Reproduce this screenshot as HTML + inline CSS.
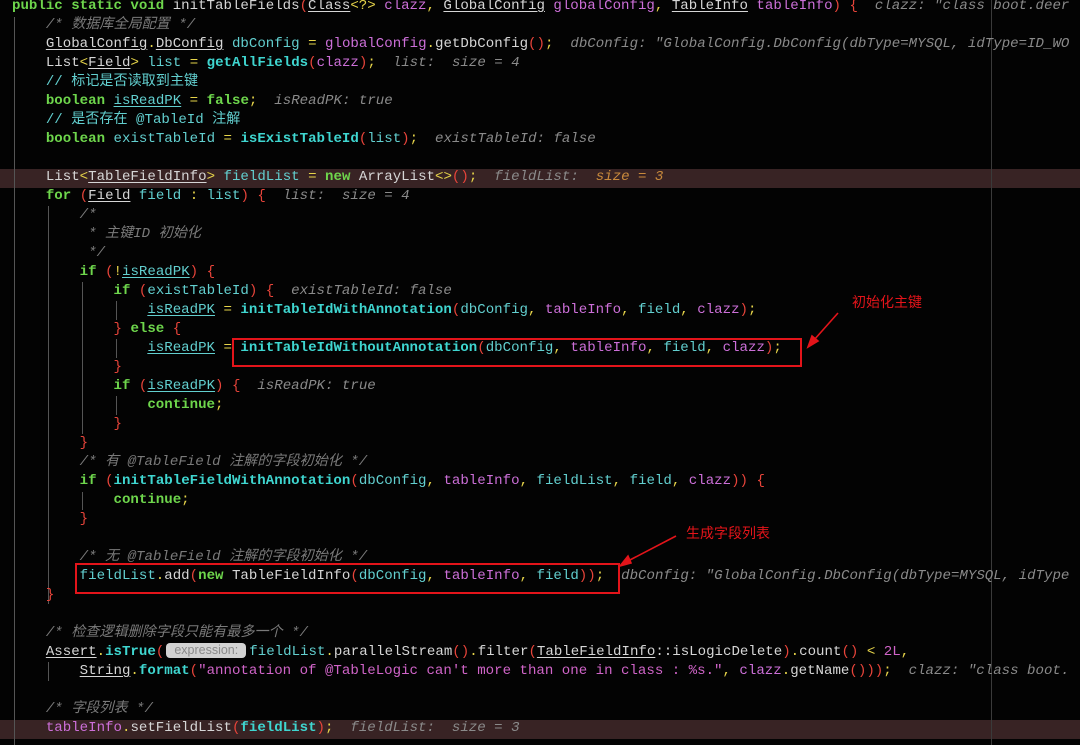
<!DOCTYPE html>
<html><head><meta charset="utf-8">
<style>
html,body{margin:0;padding:0;background:#000;width:1080px;height:745px;overflow:hidden;}
#ed{position:relative;width:1080px;height:745px;background:#030303;font-family:"Liberation Mono","Noto Sans CJK SC",monospace;font-size:14.1px;color:#d6d6d6;}
.l{position:absolute;left:12px;height:19px;line-height:19px;white-space:pre;}
.hl{position:absolute;left:0;width:1080px;height:19px;background:#382324;}
.k{color:#6ed64c;font-weight:bold}
.f{color:#62cfcf}
.m{color:#3fd6d0;font-weight:bold}
.p{color:#cc6fd8}
.r{color:#e8443a}
.y{color:#e6d44a}
.c{color:#7a7a7a;font-style:italic}
.h{color:#8a8a8a;font-style:italic}
.o{color:#c98a3c;font-style:italic}
.u{text-decoration:underline;text-underline-offset:2px}
.s{color:#d064c8}
.g{position:absolute;width:1px;background:#555;}
.box{position:absolute;border:2.5px solid #e3141a;box-sizing:border-box;}
.note{position:absolute;color:#e5141a;font-family:"Noto Sans CJK SC",sans-serif;font-size:14px;}
.pill{display:inline-block;width:80px;height:15px;line-height:15px;margin:0 3px 0 2px;border-radius:4px;background:#d2d2d2;color:#8a8a8a;font-family:"Liberation Sans",sans-serif;font-size:12.5px;text-align:center;vertical-align:1px;}
</style></head><body><div id="ed">
<div class="hl" style="top:169px"></div>
<div class="hl" style="top:720px"></div>
<div class="g" style="left:14px;top:17px;height:728px"></div>
<div class="g" style="left:48px;top:206px;height:398px"></div>
<div class="g" style="left:82px;top:282px;height:152px"></div>
<div class="g" style="left:82px;top:492px;height:18px"></div>
<div class="g" style="left:116px;top:301px;height:19px"></div>
<div class="g" style="left:116px;top:339px;height:19px"></div>
<div class="g" style="left:116px;top:396px;height:19px"></div>
<div class="g" style="left:48px;top:662px;height:19px"></div>
<div class="g" style="left:991px;top:0;height:745px;background:#3a3a3a"></div>

<div class="l" style="top:-3px"><span class="k">public static void </span>initTableFields<span class="r">(</span><span class="u">Class</span><span class="y">&lt;?&gt;</span> <span class="p">clazz</span><span class="y">,</span> <span class="u">GlobalConfig</span> <span class="p">globalConfig</span><span class="y">,</span> <span class="u">TableInfo</span> <span class="p">tableInfo</span><span class="r">) {</span>  <span class="h">clazz: "class boot.deer</span></div>
<div class="l" style="top:16px">    <span class="c">/* 数据库全局配置 */</span></div>
<div class="l" style="top:35px">    <span class="u">GlobalConfig</span><span class="y">.</span><span class="u">DbConfig</span> <span class="f">dbConfig</span> <span class="y">=</span> <span class="p">globalConfig</span><span class="y">.</span>getDbConfig<span class="r">()</span><span class="y">;</span>  <span class="h">dbConfig: "GlobalConfig.DbConfig(dbType=MYSQL, idType=ID_WO</span></div>
<div class="l" style="top:54px">    List<span class="y">&lt;</span><span class="u">Field</span><span class="y">&gt;</span> <span class="f">list</span> <span class="y">=</span> <span class="m">getAllFields</span><span class="r">(</span><span class="p">clazz</span><span class="r">)</span><span class="y">;</span>  <span class="h">list:  size = 4</span></div>
<div class="l" style="top:73px">    <span class="f">// 标记是否读取到主键</span></div>
<div class="l" style="top:92px">    <span class="k">boolean</span> <span class="u f">isReadPK</span> <span class="y">=</span> <span class="k">false</span><span class="y">;</span>  <span class="h">isReadPK: true</span></div>
<div class="l" style="top:111px">    <span class="f">// 是否存在 @TableId 注解</span></div>
<div class="l" style="top:130px">    <span class="k">boolean</span> <span class="f">existTableId</span> <span class="y">=</span> <span class="m">isExistTableId</span><span class="r">(</span><span class="f">list</span><span class="r">)</span><span class="y">;</span>  <span class="h">existTableId: false</span></div>
<div class="l" style="top:168px">    List<span class="y">&lt;</span><span class="u">TableFieldInfo</span><span class="y">&gt;</span> <span class="f">fieldList</span> <span class="y">=</span> <span class="k">new</span> ArrayList<span class="y">&lt;&gt;</span><span class="r">()</span><span class="y">;</span>  <span class="h">fieldList:  </span><span class="o">size = 3</span></div>
<div class="l" style="top:187px">    <span class="k">for</span> <span class="r">(</span><span class="u">Field</span> <span class="f">field</span> <span class="y">:</span> <span class="f">list</span><span class="r">) {</span>  <span class="h">list:  size = 4</span></div>
<div class="l" style="top:206px">        <span class="c">/*</span></div>
<div class="l" style="top:225px">         <span class="c">* 主键ID 初始化</span></div>
<div class="l" style="top:244px">         <span class="c">*/</span></div>
<div class="l" style="top:263px">        <span class="k">if</span> <span class="r">(</span><span class="y">!</span><span class="u f">isReadPK</span><span class="r">) {</span></div>
<div class="l" style="top:282px">            <span class="k">if</span> <span class="r">(</span><span class="f">existTableId</span><span class="r">) {</span>  <span class="h">existTableId: false</span></div>
<div class="l" style="top:301px">                <span class="u f">isReadPK</span> <span class="y">=</span> <span class="m">initTableIdWithAnnotation</span><span class="r">(</span><span class="f">dbConfig</span><span class="y">,</span> <span class="p">tableInfo</span><span class="y">,</span> <span class="f">field</span><span class="y">,</span> <span class="p">clazz</span><span class="r">)</span><span class="y">;</span></div>
<div class="l" style="top:320px">            <span class="r">}</span> <span class="k">else</span> <span class="r">{</span></div>
<div class="l" style="top:339px">                <span class="u f">isReadPK</span> <span class="y">=</span> <span class="m">initTableIdWithoutAnnotation</span><span class="r">(</span><span class="f">dbConfig</span><span class="y">,</span> <span class="p">tableInfo</span><span class="y">,</span> <span class="f">field</span><span class="y">,</span> <span class="p">clazz</span><span class="r">)</span><span class="y">;</span></div>
<div class="l" style="top:358px">            <span class="r">}</span></div>
<div class="l" style="top:377px">            <span class="k">if</span> <span class="r">(</span><span class="u f">isReadPK</span><span class="r">) {</span>  <span class="h">isReadPK: true</span></div>
<div class="l" style="top:396px">                <span class="k">continue</span><span class="y">;</span></div>
<div class="l" style="top:415px">            <span class="r">}</span></div>
<div class="l" style="top:434px">        <span class="r">}</span></div>
<div class="l" style="top:453px">        <span class="c">/* 有 @TableField 注解的字段初始化 */</span></div>
<div class="l" style="top:472px">        <span class="k">if</span> <span class="r">(</span><span class="m">initTableFieldWithAnnotation</span><span class="r">(</span><span class="f">dbConfig</span><span class="y">,</span> <span class="p">tableInfo</span><span class="y">,</span> <span class="f">fieldList</span><span class="y">,</span> <span class="f">field</span><span class="y">,</span> <span class="p">clazz</span><span class="r">)) {</span></div>
<div class="l" style="top:491px">            <span class="k">continue</span><span class="y">;</span></div>
<div class="l" style="top:510px">        <span class="r">}</span></div>
<div class="l" style="top:548px">        <span class="c">/* 无 @TableField 注解的字段初始化 */</span></div>
<div class="l" style="top:567px">        <span class="f">fieldList</span><span class="y">.</span>add<span class="r">(</span><span class="k">new</span> TableFieldInfo<span class="r">(</span><span class="f">dbConfig</span><span class="y">,</span> <span class="p">tableInfo</span><span class="y">,</span> <span class="f">field</span><span class="r">))</span><span class="y">;</span>  <span class="h">dbConfig: "GlobalConfig.DbConfig(dbType=MYSQL, idType</span></div>
<div class="l" style="top:586px">    <span class="r">}</span></div>
<div class="l" style="top:624px">    <span class="c">/* 检查逻辑删除字段只能有最多一个 */</span></div>
<div class="l" style="top:643px">    <span class="u">Assert</span><span class="y">.</span><span class="m">isTrue</span><span class="r">(</span><span class="pill">expression:</span><span class="f">fieldList</span><span class="y">.</span>parallelStream<span class="r">()</span><span class="y">.</span>filter<span class="r">(</span><span class="u">TableFieldInfo</span>::isLogicDelete<span class="r">)</span><span class="y">.</span>count<span class="r">()</span> <span class="y">&lt;</span> <span class="s">2L</span><span class="y">,</span></div>
<div class="l" style="top:662px">        <span class="u">String</span><span class="y">.</span><span class="m">format</span><span class="r">(</span><span class="s">"annotation of @TableLogic can't more than one in class : %s."</span><span class="y">,</span> <span class="p">clazz</span><span class="y">.</span>getName<span class="r">()))</span><span class="y">;</span>  <span class="h">clazz: "class boot.</span></div>
<div class="l" style="top:700px">    <span class="c">/* 字段列表 */</span></div>
<div class="l" style="top:719px">    <span class="p">tableInfo</span><span class="y">.</span>setFieldList<span class="r">(</span><span class="m">fieldList</span><span class="r">)</span><span class="y">;</span>  <span class="h">fieldList:  size = 3</span></div>

<div class="box" style="left:232px;top:338px;width:570px;height:29px"></div>
<div class="box" style="left:75px;top:563px;width:545px;height:31px"></div>
<div class="note" style="left:852px;top:292px">初始化主键</div>
<div class="note" style="left:686px;top:523px">生成字段列表</div>
<svg width="1080" height="745" style="position:absolute;left:0;top:0">
<g stroke="#e3141a" stroke-width="1.6" fill="#e3141a">
<line x1="838" y1="313" x2="814" y2="340"/>
<polygon points="808,347 812,336 818,341"/>
<line x1="676" y1="536" x2="628" y2="561"/>
<polygon points="620,566 628,556 631,563"/>
</g></svg>
</div></body></html>
